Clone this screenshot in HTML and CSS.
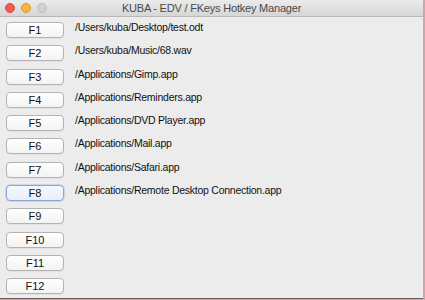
FILE: index.html
```
<!DOCTYPE html>
<html>
<head>
<meta charset="utf-8">
<link rel="stylesheet" href="styles.css">
</head>
<body>
<div class="window">
  <div class="titlebar">
    <div class="lights">
      <span class="light red"></span>
      <span class="light yellow"></span>
      <span class="light gray"></span>
    </div>
    <div class="title">KUBA - EDV / FKeys Hotkey Manager</div>
  </div>
  <div class="content">
    <div class="row"><button class="key">F1</button><span class="path">/Users/kuba/Desktop/test.odt</span></div>
    <div class="row"><button class="key">F2</button><span class="path">/Users/kuba/Music/68.wav</span></div>
    <div class="row"><button class="key">F3</button><span class="path">/Applications/Gimp.app</span></div>
    <div class="row"><button class="key">F4</button><span class="path">/Applications/Reminders.app</span></div>
    <div class="row"><button class="key">F5</button><span class="path">/Applications/DVD Player.app</span></div>
    <div class="row"><button class="key">F6</button><span class="path">/Applications/Mail.app</span></div>
    <div class="row"><button class="key">F7</button><span class="path">/Applications/Safari.app</span></div>
    <div class="row"><button class="key focus">F8</button><span class="path">/Applications/Remote Desktop Connection.app</span></div>
    <div class="row"><button class="key">F9</button><span class="path"></span></div>
    <div class="row"><button class="key">F10</button><span class="path"></span></div>
    <div class="row"><button class="key">F11</button><span class="path"></span></div>
    <div class="row"><button class="key">F12</button><span class="path"></span></div>
  </div>
</div>
</body>
</html>
```
FILE: styles.css
```
html, body {
  margin: 0;
  padding: 0;
  background: #c9a7ab;
  width: 425px;
  height: 300px;
  overflow: hidden;
}
.window {
  width: 423px;
  height: 298px;
  background: #ececec;
  border-bottom: 1px solid #6a5a5c;
  display: flex;
  flex-direction: column;
  font-family: "Liberation Sans", Arial, sans-serif;
}
.titlebar {
  height: 16px;
  background: linear-gradient(#ebebeb, #d6d6d6);
  border-bottom: 1px solid #b9b9b9;
  display: flex;
  align-items: center;
  position: relative;
}
.lights {
  display: flex;
  gap: 6px;
  padding-left: 5px;
}
.light {
  width: 8px;
  height: 8px;
  border-radius: 50%;
  display: block;
}
.red { background: #f25b52; border: 0.5px solid #d9463e; }
.yellow { background: #f6b63a; border: 0.5px solid #dc9c2a; }
.gray { background: #d0d0d0; border: 0.5px solid #c0c0c0; }
.title {
  position: absolute;
  left: 0;
  right: 0;
  top: 0;
  line-height: 16px;
  text-align: center;
  font-size: 11px;
  letter-spacing: -0.2px;
  color: #4a4a4a;
}
.content {
  display: flex;
  flex-direction: column;
  padding: 5px 0 0 6px;
  gap: 7.3px;
}
.row {
  display: flex;
  align-items: center;
  height: 16px;
}
.key {
  width: 58px;
  height: 16px;
  margin: 0;
  padding: 0;
  border: 1px solid #b3b3b3;
  border-radius: 4px;
  background: linear-gradient(#ffffff, #f3f3f3);
  font-family: "Liberation Sans", Arial, sans-serif;
  font-size: 11px;
  color: #111;
  line-height: 14px;
  box-shadow: 0 0.5px 0 rgba(0,0,0,0.08);
}
.key.focus {
  border-color: #8ea6d6;
  background: linear-gradient(#f6f8fd, #e9eef9);
  box-shadow: 0 0 0 0.5px #a9bde6;
}
.path {
  margin-left: 11px;
  font-size: 10.5px;
  letter-spacing: -0.25px;
  color: #111;
  position: relative;
  top: -3px;
  white-space: nowrap;
}
```
